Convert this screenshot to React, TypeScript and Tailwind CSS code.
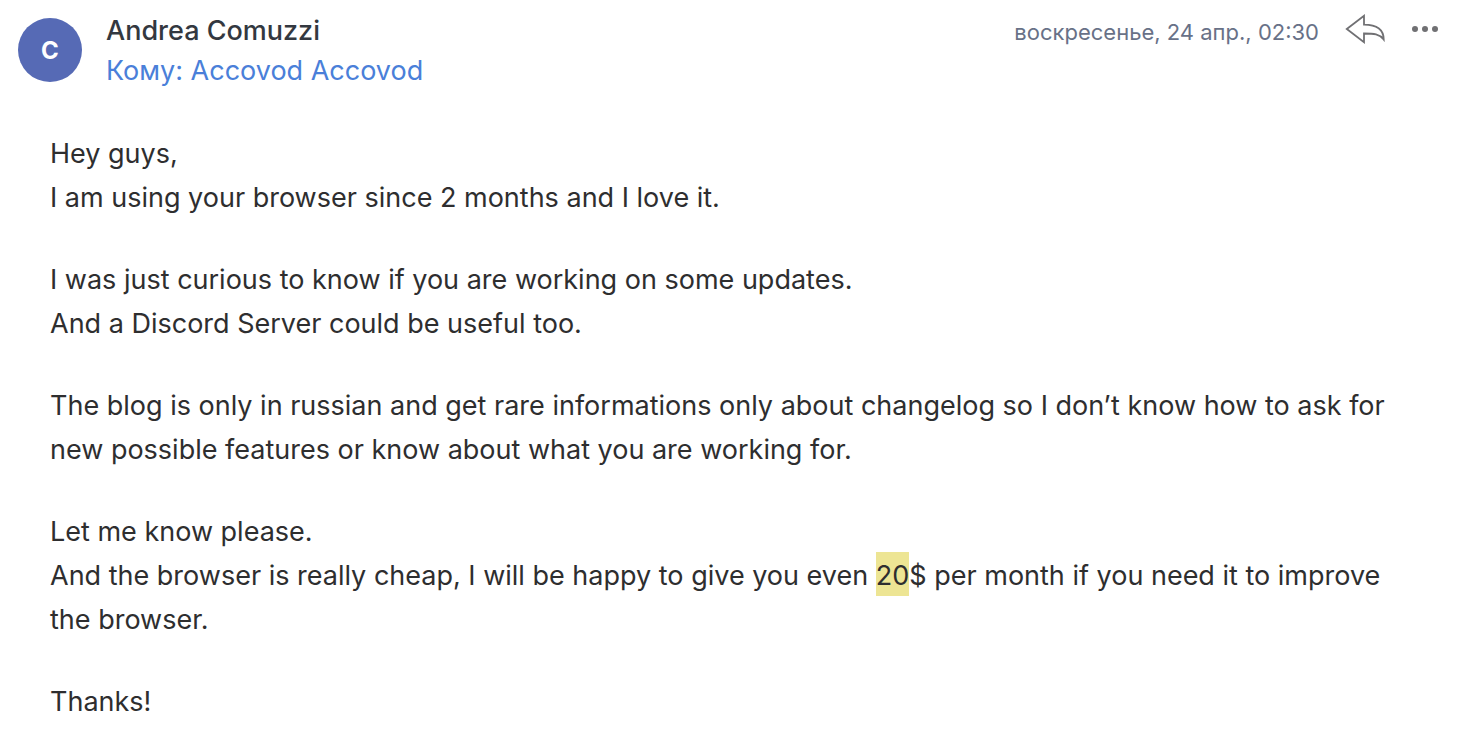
const paragraphs = [
  ["Hey guys,", "I am using your browser since 2 months and I love it."],
  [
    "I was just curious to know if you are working on some updates.",
    "And a Discord Server could be useful too.",
  ],
  [
    "The blog is only in russian and get rare informations only about changelog so I don’t know how to ask for new possible features or know about what you are working for.",
  ],
];

function ReplyIcon() {
  return (
    <svg
      viewBox="0 0 40 30"
      className="h-[30px] w-10"
      fill="none"
      stroke="#707073"
      strokeWidth="1.8"
      aria-hidden
    >
      <path d="M1.8 15 19 1.800V10.600C31 10.600 38.700 14.500 38.700 25.500 34.500 20 29 19.500 19 19.500V28.200Z" />
    </svg>
  );
}

function MoreIcon() {
  return (
    <svg viewBox="0 0 28 8" className="h-2 w-7" fill="#707073" aria-hidden>
      <circle cx="4" cy="4" r="3" />
      <circle cx="14" cy="4" r="3" />
      <circle cx="24" cy="4" r="3" />
    </svg>
  );
}

export default function App() {
  return (
    <article className="bg-white font-['Inter','Noto_Sans',sans-serif] text-[#2e2e2f]">
      <header className="flex items-start px-[27px] pt-[11px] pl-[18px]">
        <div className="mt-[7px] flex size-16 shrink-0 items-center justify-center rounded-full bg-[#566ab5] pt-0.5 text-2xl font-bold text-white">
          C
        </div>
        <div className="ml-6 flex-1 text-[27px] leading-10">
          <h1 className="font-medium text-[#333840]">Andrea Comuzzi</h1>
          <a href="#recipients" className="text-[#4a7fd9]">
            Кому: Accovod Accovod
          </a>
        </div>
        <time className="mt-[3px] text-[22px] leading-9 text-[#687187]">
          воскресенье, 24 апр., 02:30
        </time>
        <button type="button" aria-label="Ответить" className="mt-[3px] ml-[26px]">
          <ReplyIcon />
        </button>
        <button type="button" aria-label="Ещё" className="mt-[14px] ml-[26px]">
          <MoreIcon />
        </button>
      </header>

      <div className="space-y-[38px] px-[50px] pt-[41px] text-[27px] leading-[44px]">
        {paragraphs.map((lines) => (
          <p key={lines[0]}>
            {lines.map((line) => (
              <span key={line} className="block">
                {line}
              </span>
            ))}
          </p>
        ))}
        <p>
          Let me know please.
          <br />
          And the browser is really cheap, I will be happy to give you even{" "}
          <mark className="bg-[#ede594] pt-[7px] pb-[4px] text-inherit">20</mark>$ per month if you
          need it to improve the browser.
        </p>
        <p>Thanks!</p>
      </div>
    </article>
  );
}
